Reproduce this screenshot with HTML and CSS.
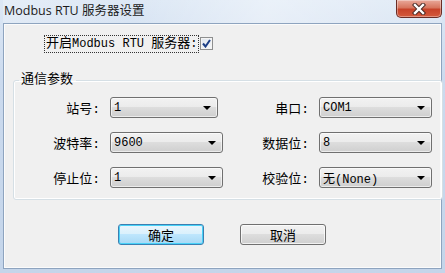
FILE: index.html
```html
<!DOCTYPE html>
<html lang="zh-CN">
  <head>
    <meta charset="UTF-8" />
    <title>Modbus RTU 服务器设置</title>
    <link rel="stylesheet" href="styles.css">
  </head>
  <body>
    <div class="window">
      <div class="titlebar">
        <span class="title">Modbus RTU 服务器设置</span>
        <button class="close" type="button">
          <svg width="14" height="12" viewBox="0 0 14 12">
            <path d="M3 2 L11 10 M11 2 L3 10" stroke="#4a2a25" stroke-width="4.4" stroke-linecap="square" />
            <path d="M3 2 L11 10 M11 2 L3 10" stroke="#ffffff" stroke-width="2.4" stroke-linecap="square" />
          </svg>
        </button>
      </div>

      <div class="client">
        <div class="enable-row">
          <label class="focus" for="enable">开启<span class="latin">Modbus RTU </span>服务器<span class="latin">:</span></label>
          <span class="checkbox">
            <svg width="9" height="9" viewBox="0 0 9 9">
              <path d="M1 4.5 L3.5 7.5 L8 1" fill="none" stroke="#1d3f86" stroke-width="2" />
            </svg>
          </span>
        </div>

        <fieldset class="group">
          <legend>通信参数</legend>

          <label class="lbl">站号:</label>
          <div class="combo narrow"><span>1</span><i class="arrow"></i></div>
          <label class="lbl">串口:</label>
          <div class="combo"><span>COM1</span><i class="arrow"></i></div>

          <label class="lbl">波特率:</label>
          <div class="combo"><span>9600</span><i class="arrow"></i></div>
          <label class="lbl">数据位:</label>
          <div class="combo"><span>8</span><i class="arrow"></i></div>

          <label class="lbl">停止位:</label>
          <div class="combo"><span>1</span><i class="arrow"></i></div>
          <label class="lbl">校验位:</label>
          <div class="combo"><span>无(None)</span><i class="arrow"></i></div>
        </fieldset>

        <div class="buttons">
          <button class="btn default" type="button">确定</button>
          <button class="btn" type="button">取消</button>
        </div>
      </div>
    </div>
  </body>
</html>
```

FILE: styles.css
```css
html,
body {
  margin: 0;
  padding: 0;
}
body {
  width: 445px;
  height: 273px;
  overflow: hidden;
  font-family: "Liberation Mono", "Noto Sans CJK SC", monospace;
  font-size: 13px;
  color: #000;
}
.window {
  box-sizing: border-box;
  width: 445px;
  height: 273px;
  padding: 0 3px 4px 3px;
  display: flex;
  flex-direction: column;
  background: linear-gradient(to bottom, #dde8f5 0%, #cbdaee 30%, #c4d5ea 100%);
}
.titlebar {
  height: 23px;
  display: flex;
  justify-content: space-between;
  align-items: flex-start;
  background: linear-gradient(100deg, rgba(255, 255, 255, 0.25) 0%, rgba(255, 255, 255, 0) 30%, rgba(255, 255, 255, 0.4) 60%, rgba(255, 255, 255, 0.1) 100%);
}
.title {
  font-family: "Open Sans", "Noto Sans CJK SC", sans-serif;
  font-size: 12.5px;
  color: #1b1b1b;
  margin: 3px 0 0 1px;
  line-height: 16px;
}
.close {
  width: 46px;
  height: 18px;
  padding: 0;
  border: 1px solid #6a2d26;
  border-top: none;
  border-radius: 0 0 5px 5px;
  background: linear-gradient(to bottom, #e9a99b 0%, #d7765f 45%, #c7432a 55%, #d45a3c 100%);
  box-shadow: inset 0 0 0 1px rgba(255, 255, 255, 0.35);
  display: flex;
  align-items: center;
  justify-content: center;
}
.client {
  flex: 1;
  background: #f0f0f0;
  border: 1px solid #8ea4bf;
  box-shadow: inset 0 0 0 1px #fbfbfb;
  display: flex;
  flex-direction: column;
}
.enable-row {
  display: flex;
  align-items: center;
  margin: 12px 0 0 41px;
  height: 15px;
}
.focus {
  outline: 1px dotted #333;
  outline-offset: 0;
  padding: 0 1px;
  line-height: 15px;
}
.latin {
  font-size: 12px;
}
.checkbox {
  box-sizing: border-box;
  width: 13px;
  height: 13px;
  margin-left: 2px;
  border: 1px solid #8e8f8f;
  background: linear-gradient(135deg, #dfe6ee 0%, #f7f8f9 100%);
  box-shadow: inset 0 0 0 1px #f4f4f4;
  display: flex;
  align-items: center;
  justify-content: center;
}
.group {
  margin: 22px 8px 0 9px;
  padding: 10px 10px 11px 0;
  border: 1px solid #d5dfe5;
  border-radius: 3px;
  box-shadow: inset 0 0 0 1px #fff;
  display: grid;
  grid-template-columns: 86px 113px 76px 113px;
  column-gap: 10px;
  row-gap: 14px;
  align-items: center;
}
.group legend {
  padding: 0 3px 0 2px;
  margin-left: 5px;
  line-height: 14px;
}
.lbl {
  text-align: right;
}
.combo {
  box-sizing: border-box;
  height: 21px;
  border: 1px solid #707070;
  border-radius: 3px;
  background: linear-gradient(to bottom, #f2f2f2 0%, #ebebeb 50%, #dddddd 50%, #cfcfcf 100%);
  box-shadow: inset 0 0 0 1px rgba(255, 255, 255, 0.6);
  display: flex;
  align-items: center;
  justify-content: space-between;
  padding: 0 6px 0 3px;
  font-size: 12px;
}
.combo.narrow {
  width: 108px;
}
.arrow {
  width: 0;
  height: 0;
  border-left: 4px solid transparent;
  border-right: 4px solid transparent;
  border-top: 4px solid #000;
}
.buttons {
  display: flex;
  gap: 36px;
  margin: 24px 0 0 114px;
}
.btn {
  width: 86px;
  height: 21px;
  padding: 0;
  font-family: "Noto Sans CJK SC", sans-serif;
  font-size: 13px;
  line-height: 19px;
  color: #000;
  border: 1px solid #707070;
  border-radius: 3px;
  background: linear-gradient(to bottom, #f2f2f2 0%, #ebebeb 50%, #dddddd 50%, #cfcfcf 100%);
  box-shadow: inset 0 0 0 1px rgba(255, 255, 255, 0.7);
}
.btn.default {
  border-color: #3c7fb1;
  background: linear-gradient(to bottom, #eaf6fd 0%, #d9f0fc 50%, #bee6fd 50%, #a7d9f5 100%);
  box-shadow: inset 0 0 0 1px #48d2f8;
}
```
